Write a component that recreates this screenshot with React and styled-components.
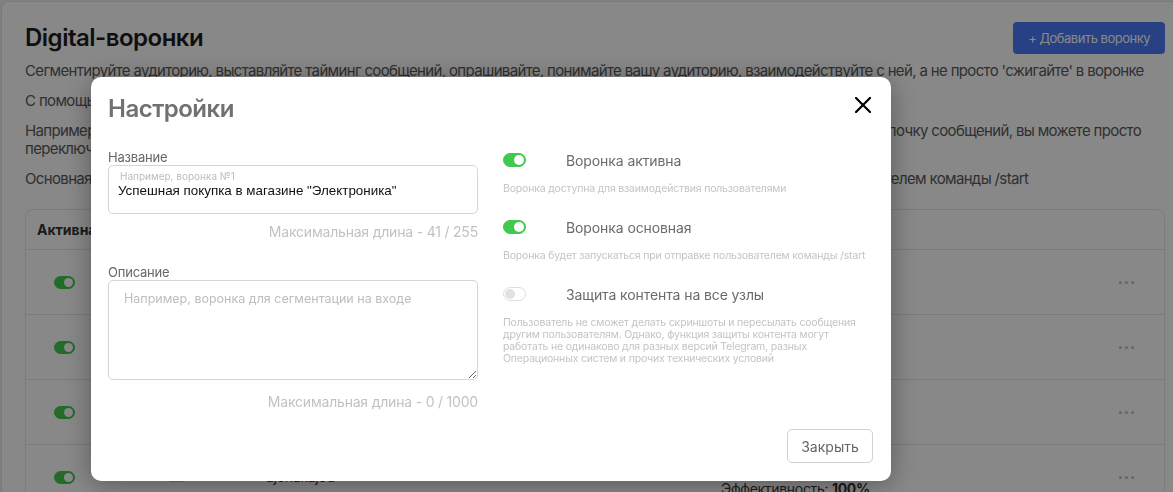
import React from 'react';
import styled, { createGlobalStyle } from 'styled-components';

const GlobalStyle = createGlobalStyle`
  * { box-sizing: border-box; }
  html, body { margin: 0; padding: 0; }
  body {
    font-family: Inter, "Noto Sans", sans-serif;
    background: #f0f0f0;
    width: 1173px;
    height: 492px;
    overflow: hidden;
  }
`;

const Page = styled.div`
  padding: 1px 0 0 1px;
  height: 492px;
  overflow: hidden;
`;

const Card = styled.main`
  width: 1190px;
  min-height: 640px;
  background: #fff;
  border: 1px solid #e4e4e4;
  border-radius: 8px;
  padding: 20px 25px 0 23px;
`;

const Header = styled.div`
  display: flex;
  justify-content: space-between;
  align-items: center;
  height: 32px;
`;

const Title = styled.h1`
  margin: 0;
  font-size: 24px;
  line-height: 32px;
  font-weight: 600;
  letter-spacing: -0.5px;
  color: #1d1d1d;
`;

const AddButton = styled.button`
  height: 32px;
  padding: 0 15px;
  border: none;
  border-radius: 4px;
  background: #4a7bf7;
  color: #fff;
  font-family: inherit;
  font-size: 13px;
  letter-spacing: -0.5px;
`;

const Intro = styled.div`
  margin-top: 8px;
`;

const Paragraph = styled.p`
  margin: 0 0 12px;
  font-size: 15px;
  line-height: 18px;
  letter-spacing: -0.65px;
  color: #5a5a5a;
  white-space: nowrap;
`;

const Table = styled.div`
  margin-top: 21px;
  border: 1px solid #e6e6e6;
  border-radius: 8px;
  overflow: hidden;
`;

const Row = styled.div`
  display: grid;
  grid-template-columns: 76px 150px 455px 1fr 75px;
  align-items: center;
  height: ${(p) => (p.$head ? '39px' : '65px')};
  border-top: ${(p) => (p.$head ? 'none' : '1px solid #e6e6e6')};
`;

const HeadCell = styled.div`
  padding-left: ${(p) => (p.$first ? '11px' : '14px')};
  font-size: 14px;
  font-weight: 700;
  color: #333;
  white-space: nowrap;
`;

const CenterCell = styled.div`
  display: flex;
  justify-content: center;
  align-items: center;
`;

const TextCell = styled.div`
  padding-left: 14px;
  font-size: 14px;
  line-height: 24px;
  letter-spacing: -0.3px;
  color: #333;
  white-space: nowrap;
`;

const Strong = styled.b`
  font-weight: 700;
`;

const Checkbox = styled.span`
  display: inline-block;
  width: 20px;
  height: 20px;
  border: 1px solid #cfcfcf;
  border-radius: 5px;
  background: #fff;
  margin-top: -10px;
`;

const MoreButton = styled.button`
  border: none;
  background: none;
  padding: 0;
  display: flex;
  align-items: center;
  justify-content: center;
`;

const Switch = styled.span`
  position: relative;
  display: inline-block;
  flex: none;
  width: ${(p) => p.$w}px;
  height: ${(p) => p.$h}px;
  border-radius: 999px;
  background: ${(p) => (p.$on ? '#40c94c' : '#fff')};
  border: 1px solid ${(p) => (p.$on ? '#40c94c' : '#dedede')};
  &::after {
    content: '';
    position: absolute;
    top: 1px;
    ${(p) => (p.$on ? 'right: 1px;' : 'left: 1px;')}
    width: ${(p) => p.$h - 4}px;
    height: ${(p) => p.$h - 4}px;
    border-radius: 50%;
    background: ${(p) => (p.$on ? '#fff' : '#e2e2e2')};
  }
`;

const Overlay = styled.div`
  position: fixed;
  inset: 0;
  background: rgba(0, 0, 0, 0.467);
  padding: 77px 0 0 91px;
`;

const Modal = styled.div`
  width: 800px;
  height: 404px;
  background: #fff;
  border-radius: 10px;
  box-shadow: 0 4px 28px rgba(0, 0, 0, 0.35);
  padding: 16px 18px 18px 17px;
  display: flex;
  flex-direction: column;
`;

const ModalHead = styled.div`
  display: flex;
  justify-content: space-between;
  align-items: flex-start;
`;

const ModalTitle = styled.h2`
  margin: 0;
  font-size: 24px;
  line-height: 32px;
  font-weight: 600;
  letter-spacing: -0.5px;
  color: #717171;
`;

const CloseButton = styled.button`
  border: none;
  background: none;
  padding: 0;
  margin: 4px 2px 0 0;
  width: 16px;
  height: 16px;
  display: flex;
`;

const Body = styled.div`
  display: grid;
  grid-template-columns: 370px 1fr;
  column-gap: 25px;
  margin-top: 25px;
`;

const Column = styled.div`
  display: flex;
  flex-direction: column;
`;

const FieldLabel = styled.label`
  font-size: 13px;
  line-height: 14px;
  letter-spacing: -0.2px;
  color: #666;
  margin-top: ${(p) => p.$top || 0}px;
  margin-bottom: 1px;
`;

const InputBox = styled.div`
  height: 49px;
  border: 1px solid #d5d5d5;
  border-radius: 5px;
  padding: 4px 9px 0;
  display: flex;
  flex-direction: column;
`;

const FloatLabel = styled.span`
  font-size: 10px;
  line-height: 12px;
  color: #bdbdbd;
  margin-left: 2px;
`;

const InputValue = styled.input`
  border: none;
  outline: none;
  padding: 0;
  font-family: "Liberation Sans", Arial, sans-serif;
  font-size: 13.4px;
  line-height: 18px;
  height: 18px;
  color: #111;
  background: transparent;
`;

const TextArea = styled.textarea`
  display: block;
  width: 100%;
  height: 100px;
  border: 1px solid #d5d5d5;
  border-radius: 5px;
  padding: 10px 15px;
  font-family: inherit;
  font-size: 12.5px;
  line-height: 16px;
  resize: vertical;
  outline: none;
  &::placeholder {
    color: #bdbdbd;
  }
`;

const Counter = styled.div`
  margin-top: ${(p) => p.$gap}px;
  text-align: right;
  font-size: 14px;
  line-height: 18px;
  letter-spacing: -0.2px;
  color: #c2c2c2;
`;

const ToggleRow = styled.div`
  display: flex;
  align-items: center;
  height: 20px;
  gap: 40px;
  margin-top: ${(p) => p.$top || 0}px;
`;

const ToggleLabel = styled.span`
  font-size: 14px;
  letter-spacing: -0.1px;
  color: #6b6b6b;
`;

const Hint = styled.div`
  margin-top: 13px;
  font-size: 10.5px;
  line-height: 12px;
  letter-spacing: -0.18px;
  color: #c4c4c4;
  white-space: nowrap;
`;

const Footer = styled.div`
  margin-top: auto;
  display: flex;
  justify-content: flex-end;
`;

const CloseText = styled.button`
  width: 86px;
  height: 34px;
  border: 1px solid #d2d2d2;
  border-radius: 5px;
  background: #fff;
  font-family: inherit;
  font-size: 14px;
  color: #666;
`;

const Dots = () => (
  <svg width="21" height="21" viewBox="0 0 24 24" fill="#c4c4c4">
    <circle cx="5" cy="12" r="1.8" />
    <circle cx="12" cy="12" r="1.8" />
    <circle cx="19" cy="12" r="1.8" />
  </svg>
);

const rows = [
  { name: 'Приветственная воронка', users: 128, eff: '64%' },
  { name: 'Успешная покупка', users: 42, eff: '81%' },
  { name: 'Опрос после доставки', users: 17, eff: '53%' },
  { name: 'ajonakajod', users: 3, eff: '100%' },
];

export default function App() {
  return (
    <>
      <GlobalStyle />
      <Page>
        <Card>
          <Header>
            <Title>Digital-воронки</Title>
            <AddButton>+ Добавить воронку</AddButton>
          </Header>
          <Intro>
            <Paragraph>
              Сегментируйте аудиторию, выставляйте тайминг сообщений, опрашивайте, понимайте вашу аудиторию, взаимодействуйте с ней, а не просто 'сжигайте' в воронке
            </Paragraph>
            <Paragraph>
              С помощью воронок вы можете выстраивать цепочки сообщений для разных сегментов аудитории.
            </Paragraph>
            <Paragraph>
              Например, если вы хотите на время приостановить работу этой же воронки для всех подписчиков или изменить в ней всю цепочку сообщений, вы можете просто
              <br />
              переключить её в неактивное состояние, и пользователи не будут попадать в эту воронку, пока вы снова её не включите.
            </Paragraph>
            <Paragraph>
              Основная воронка — это воронка, которая будет сразу автоматически запускаться для каждого гостя при отправке пользователем команды /start
            </Paragraph>
          </Intro>
          <Table>
            <Row $head>
              <HeadCell $first>Активна</HeadCell>
              <HeadCell>Выбрать</HeadCell>
              <HeadCell>Название</HeadCell>
              <HeadCell>Статистика</HeadCell>
              <HeadCell />
            </Row>
            {rows.map((r) => (
              <Row key={r.name}>
                <CenterCell>
                  <Switch $on $w={21} $h={13} />
                </CenterCell>
                <CenterCell>
                  <Checkbox />
                </CenterCell>
                <TextCell>{r.name}</TextCell>
                <TextCell>
                  <div>Пользователей: {r.users}</div>
                  <div>
                    Эффективность: <Strong>{r.eff}</Strong>
                  </div>
                </TextCell>
                <CenterCell>
                  <MoreButton>
                    <Dots />
                  </MoreButton>
                </CenterCell>
              </Row>
            ))}
          </Table>
        </Card>
      </Page>
      <Overlay>
        <Modal>
          <ModalHead>
            <ModalTitle>Настройки</ModalTitle>
            <CloseButton aria-label="Закрыть">
              <svg width="16" height="16" viewBox="0 0 16 16">
                <path d="M1 1L15 15M15 1L1 15" stroke="#000" strokeWidth="2.2" strokeLinecap="square" />
              </svg>
            </CloseButton>
          </ModalHead>
          <Body>
            <Column>
              <FieldLabel>Название</FieldLabel>
              <InputBox>
                <FloatLabel>Например, воронка №1</FloatLabel>
                <InputValue defaultValue={'Успешная покупка в магазине "Электроника"'} />
              </InputBox>
              <Counter $gap={9}>Максимальная длина - 41 / 255</Counter>
              <FieldLabel $top={24}>Описание</FieldLabel>
              <TextArea placeholder="Например, воронка для сегментации на входе" />
              <Counter $gap={13}>Максимальная длина - 0 / 1000</Counter>
            </Column>
            <Column>
              <ToggleRow>
                <Switch $on $w={23} $h={14} />
                <ToggleLabel>Воронка активна</ToggleLabel>
              </ToggleRow>
              <Hint>Воронка доступна для взаимодействия пользователями</Hint>
              <ToggleRow $top={22}>
                <Switch $on $w={23} $h={14} />
                <ToggleLabel>Воронка основная</ToggleLabel>
              </ToggleRow>
              <Hint>Воронка будет запускаться при отправке пользователем команды /start</Hint>
              <ToggleRow $top={22}>
                <Switch $w={23} $h={14} />
                <ToggleLabel>Защита контента на все узлы</ToggleLabel>
              </ToggleRow>
              <Hint>
                Пользователь не сможет делать скриншоты и пересылать сообщения
                <br />
                другим пользователям. Однако, функция защиты контента могут
                <br />
                работать не одинаково для разных версий Telegram, разных
                <br />
                Операционных систем и прочих технических условий
              </Hint>
            </Column>
          </Body>
          <Footer>
            <CloseText>Закрыть</CloseText>
          </Footer>
        </Modal>
      </Overlay>
    </>
  );
}
